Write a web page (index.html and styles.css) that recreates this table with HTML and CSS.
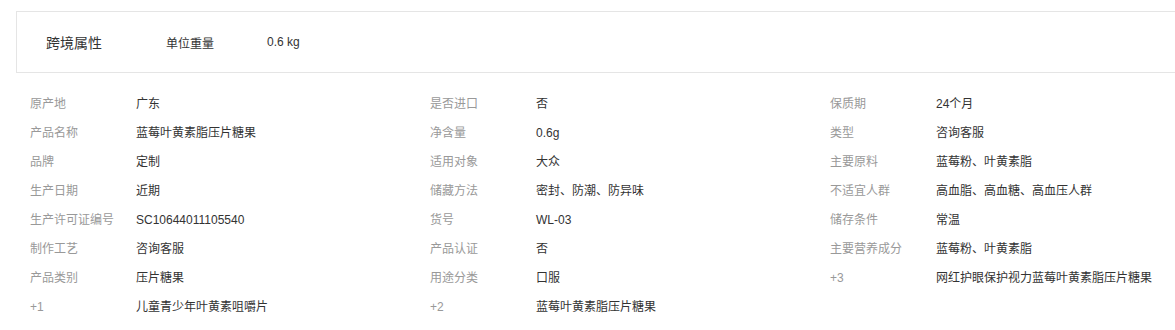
FILE: index.html
```html
<!DOCTYPE html>
<html lang="zh-CN">
  <head>
    <meta charset="UTF-8" />
    <meta name="viewport" content="width=device-width, initial-scale=1.0" />
    <title>商品属性</title>
    <link rel="stylesheet" href="styles.css">
  </head>
  <body>
    <div class="cross_border">
      <span class="cb_title">跨境属性</span>
      <span class="cb_label">单位重量</span>
      <span class="cb_value">0.6 kg</span>
    </div>
    <div class="attr_list">
      <div class="attr_item"><span class="attr_label">原产地</span><span class="attr_value">广东</span></div>
      <div class="attr_item"><span class="attr_label">是否进口</span><span class="attr_value">否</span></div>
      <div class="attr_item"><span class="attr_label">保质期</span><span class="attr_value">24个月</span></div>

      <div class="attr_item"><span class="attr_label">产品名称</span><span class="attr_value">蓝莓叶黄素脂压片糖果</span></div>
      <div class="attr_item"><span class="attr_label">净含量</span><span class="attr_value">0.6g</span></div>
      <div class="attr_item"><span class="attr_label">类型</span><span class="attr_value">咨询客服</span></div>

      <div class="attr_item"><span class="attr_label">品牌</span><span class="attr_value">定制</span></div>
      <div class="attr_item"><span class="attr_label">适用对象</span><span class="attr_value">大众</span></div>
      <div class="attr_item"><span class="attr_label">主要原料</span><span class="attr_value">蓝莓粉、叶黄素脂</span></div>

      <div class="attr_item"><span class="attr_label">生产日期</span><span class="attr_value">近期</span></div>
      <div class="attr_item"><span class="attr_label">储藏方法</span><span class="attr_value">密封、防潮、防异味</span></div>
      <div class="attr_item"><span class="attr_label">不适宜人群</span><span class="attr_value">高血脂、高血糖、高血压人群</span></div>

      <div class="attr_item"><span class="attr_label">生产许可证编号</span><span class="attr_value">SC10644011105540</span></div>
      <div class="attr_item"><span class="attr_label">货号</span><span class="attr_value">WL-03</span></div>
      <div class="attr_item"><span class="attr_label">储存条件</span><span class="attr_value">常温</span></div>

      <div class="attr_item"><span class="attr_label">制作工艺</span><span class="attr_value">咨询客服</span></div>
      <div class="attr_item"><span class="attr_label">产品认证</span><span class="attr_value">否</span></div>
      <div class="attr_item"><span class="attr_label">主要营养成分</span><span class="attr_value">蓝莓粉、叶黄素脂</span></div>

      <div class="attr_item"><span class="attr_label">产品类别</span><span class="attr_value">压片糖果</span></div>
      <div class="attr_item"><span class="attr_label">用途分类</span><span class="attr_value">口服</span></div>
      <div class="attr_item"><span class="attr_label">+3</span><span class="attr_value">网红护眼保护视力蓝莓叶黄素脂压片糖果</span></div>

      <div class="attr_item"><span class="attr_label">+1</span><span class="attr_value">儿童青少年叶黄素咀嚼片</span></div>
      <div class="attr_item"><span class="attr_label">+2</span><span class="attr_value">蓝莓叶黄素脂压片糖果</span></div>
    </div>
  </body>
</html>
```

FILE: styles.css
```css
html,
body {
  overflow-x: hidden;
}
body {
  margin: 0;
  font-family: "Liberation Sans", "Noto Sans CJK SC", sans-serif;
  font-size: 12px;
  color: #333;
  background-color: #fff;
}
.cross_border {
  display: flex;
  align-items: center;
  height: 60px;
  margin: 11px -40px 0 16px;
  padding-left: 29px;
  border: 1px solid #e5e5e5;
}
.cb_title {
  width: 120px;
  font-size: 14px;
}
.cb_label {
  width: 101px;
}
.attr_list {
  display: grid;
  grid-template-columns: 400px 400px 400px;
  margin-top: 17px;
  padding-left: 30px;
}
.attr_item {
  display: flex;
  line-height: 29px;
  white-space: nowrap;
}
.attr_label {
  width: 106px;
  flex-shrink: 0;
  color: #999;
}
.attr_value {
  color: #333;
}
```
